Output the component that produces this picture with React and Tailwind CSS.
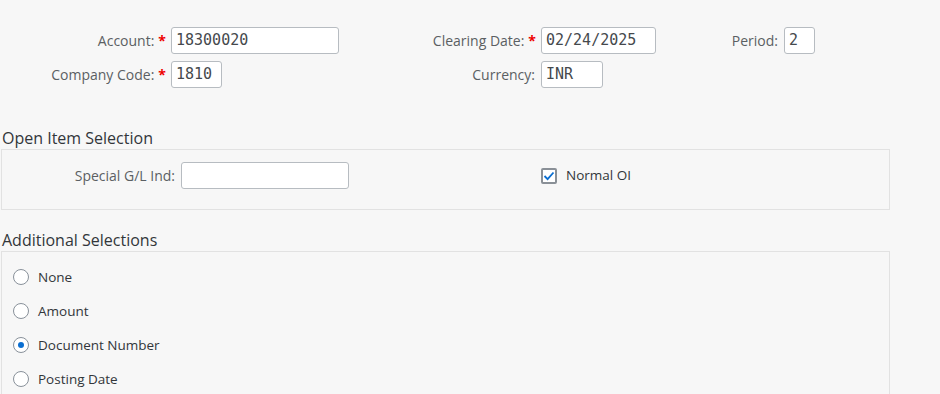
import React from 'react'

const labelCls = "text-[14px] text-[#5b5f63]"
const inputCls = "h-[27px] bg-white border border-[#b7bcc1] rounded-[3px] px-[4px] text-[15px] text-[#45494d] flex items-center"

function Req() {
  return <span className="text-[#e00] text-[14px] ml-[4px] font-bold">*</span>
}

function Field({ value, w }) {
  return (
    <div className={inputCls} style={{ width: w }}>
      <span style={{ fontFamily: '"DejaVu Sans Mono", "Liberation Mono", monospace' }}>{value}</span>
    </div>
  )
}

function Radio({ label, checked }) {
  return (
    <div className="h-[34px] flex items-center">
      <div className="ml-[11px] w-[16px] h-[16px] rounded-full border border-[#89919a] bg-white flex items-center justify-center">
        {checked && <div className="w-[6px] h-[6px] rounded-full bg-[#0a6ed1]" />}
      </div>
      <span className="ml-[9px] text-[13.5px] text-[#32363a]">{label}</span>
    </div>
  )
}

export default function App() {
  return (
    <div
      className="w-[940px] h-[394px] bg-[#f7f7f7] overflow-hidden"
      style={{ fontFamily: '"Open Sans", "Noto Sans", sans-serif' }}
    >
      {/* Header fields */}
      <div className="pt-[27px] flex flex-col gap-[7px]">
        <div className="flex items-center">
          <div className="w-[171px] pr-[5px] flex justify-end items-center">
            <span className={labelCls}>Account:</span><Req />
          </div>
          <Field value="18300020" w="168px" />
          <div className="w-[202px] pr-[5px] flex justify-end items-center">
            <span className={labelCls}>Clearing Date:</span><Req />
          </div>
          <Field value="02/24/2025" w="115px" />
          <div className="w-[128px] pr-[6px] flex justify-end items-center">
            <span className={labelCls}>Period:</span>
          </div>
          <Field value="2" w="31px" />
        </div>
        <div className="flex items-center">
          <div className="w-[171px] pr-[5px] flex justify-end items-center">
            <span className={labelCls}>Company Code:</span><Req />
          </div>
          <Field value="1810" w="51px" />
          <div className="w-[319px] pr-[6px] flex justify-end items-center">
            <span className={labelCls}>Currency:</span>
          </div>
          <Field value="INR" w="62px" />
        </div>
      </div>

      {/* Open Item Selection */}
      <div className="mt-[40px] pl-[2px] h-[21px] leading-[21px] text-[16px] text-[#32363a]">
        Open Item Selection
      </div>
      <div className="ml-[1px] w-[889px] h-[61px] border border-[#e2e2e2] pt-[12px]">
        <div className="flex items-center h-[27px]">
          <div className="w-[179px] pr-[6px] flex justify-end">
            <span className={labelCls}>Special G/L Ind:</span>
          </div>
          <div className="w-[168px] h-[27px] bg-white border border-[#b7bcc1] rounded-[3px]" />
          <div className="ml-[192px] w-[16px] h-[16px] border-2 border-[#8a9097] rounded-[2px] bg-white flex items-center justify-center">
            <svg width="12" height="12" viewBox="0 0 12 12">
              <path d="M1.5 6 L4.6 9.2 L10.5 2.5" fill="none" stroke="#0a6ed1" strokeWidth="1.8" />
            </svg>
          </div>
          <span className="ml-[9px] text-[13.5px] text-[#32363a]">Normal OI</span>
        </div>
      </div>

      {/* Additional Selections */}
      <div className="mt-[20px] pl-[2px] h-[21px] leading-[21px] text-[16px] text-[#32363a]">
        Additional Selections
      </div>
      <div className="ml-[1px] w-[889px] h-[200px] border border-[#e2e2e2] pt-[8px]">
        <Radio label="None" />
        <Radio label="Amount" />
        <Radio label="Document Number" checked />
        <Radio label="Posting Date" />
      </div>
    </div>
  )
}
